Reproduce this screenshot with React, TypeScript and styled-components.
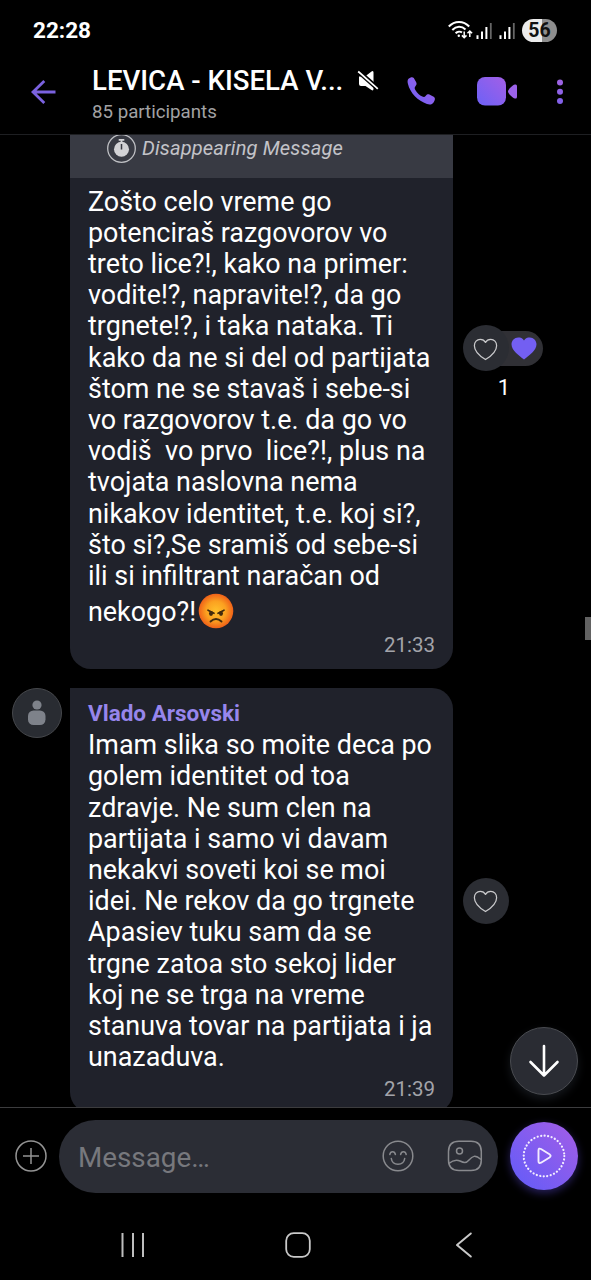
import React from "react";
import styled, { createGlobalStyle } from "styled-components";

const GlobalStyle = createGlobalStyle`
  * { box-sizing: border-box; }
  body { margin: 0; background: #000; font-family: Roboto, "Liberation Sans", sans-serif; }
  svg { display: block; flex: none; }
`;

const Screen = styled.div`
  position: relative;
  width: 591px;
  height: 1280px;
  display: flex;
  flex-direction: column;
  overflow: hidden;
  background: #000;
  color: #fff;
`;

const StatusBar = styled.div`
  height: 60px;
  flex: none;
  display: flex;
  align-items: center;
  padding: 0 34px 0 33px;
`;

const Clock = styled.span`
  flex: 1;
  font-size: 22.5px;
  font-weight: 700;
  line-height: 26px;
`;

const StatusIcons = styled.div`
  display: flex;
  align-items: center;
`;

const Signal = styled.div`
  margin: 1px 7px 0 0;
`;

const Battery = styled.div`
  width: 35px;
  height: 23px;
  border-radius: 12px;
  background: linear-gradient(90deg, #ececec 56%, #8e8e8e 56%);
  color: #111;
  font-size: 19.5px;
  font-weight: 700;
  line-height: 24px;
  text-align: center;
`;

const Header = styled.header`
  height: 75px;
  flex: none;
  display: flex;
  border-bottom: 1px solid #1e1f22;
`;

const BackSlot = styled.div`
  width: 92px;
  padding: 20px 0 0 30px;
`;

const TitleBlock = styled.div`
  width: 315px;
  display: flex;
  flex-direction: column;
`;

const TitleRow = styled.div`
  display: flex;
  height: 37px;
  padding-top: 4px;
`;

const Title = styled.h1`
  margin: 0;
  width: 265px;
  font-size: 27.6px;
  font-weight: 500;
  line-height: 34px;
  white-space: nowrap;
`;

const Participants = styled.div`
  font-size: 18.7px;
  line-height: 24px;
  margin-top: 3px;
  color: #a2a2a4;
`;

const HeaderActions = styled.div`
  display: flex;
  padding-top: 16px;
`;

const Action = styled.div<{ $w: number }>`
  width: ${(p) => p.$w}px;
`;

const Chat = styled.main`
  height: 972px;
  flex: none;
  overflow: hidden;
`;

const MessageRow = styled.div<{ $gap?: number }>`
  display: grid;
  grid-template-columns: 70px 383px 1fr;
  margin-top: ${(p) => p.$gap || 0}px;
`;

const Bubble = styled.article<{ $radius: string; $h: number }>`
  grid-column: 2;
  height: ${(p) => p.$h}px;
  border-radius: ${(p) => p.$radius};
  background: #20222b;
  overflow: hidden;
`;

const Notice = styled.div`
  height: 43px;
  padding-left: 36px;
  display: flex;
  background: #383a43;
  color: #c3c3c8;
  font-size: 20.1px;
  font-style: italic;
  line-height: 27px;
`;

const NoticeText = styled.span`
  margin-left: 6px;
  letter-spacing: 0.13px;
`;

const Body = styled.div<{ $top: number }>`
  padding: ${(p) => p.$top}px 18px 0 18px;
`;

const Sender = styled.div`
  height: 33.2px;
  color: #9786ec;
  font-size: 22.5px;
  font-weight: 700;
  line-height: 33px;
`;

const Line = styled.div`
  height: 31.2px;
  font-size: 26.9px;
  line-height: 31.2px;
  white-space: pre;
`;

const EmojiLine = styled(Line)`
  display: flex;
  margin-top: 5px;
`;

const Time = styled.div<{ $top: number }>`
  margin-top: ${(p) => p.$top}px;
  text-align: right;
  font-size: 20.5px;
  line-height: 24px;
  color: #a3a4aa;
`;

const ReactionSlot = styled.div<{ $top?: number }>`
  grid-column: 3;
  padding-left: 10px;
  ${(p) => (p.$top ? `padding-top: ${p.$top}px;` : "align-self: center;")}
`;

const ReactionPill = styled.div`
  width: 80px;
  height: 46px;
  display: flex;
  align-items: center;
`;

const LikeButton = styled.div`
  position: relative;
  z-index: 1;
  width: 46px;
  height: 46px;
  flex: none;
  border-radius: 50%;
  background: #2b2d33;
  display: flex;
  align-items: center;
  justify-content: center;
  padding: 2px 1px 0 0;
`;

const ReactionTail = styled.div`
  width: 57px;
  height: 35px;
  margin-left: -23px;
  padding-left: 25px;
  border-radius: 0 18px 18px 0;
  background: #303035;
  display: flex;
  align-items: center;
`;

const ReactionCount = styled.div`
  width: 82px;
  margin-top: 4px;
  text-align: center;
  font-size: 22px;
  line-height: 26px;
`;

const Avatar = styled.div`
  width: 50px;
  height: 50px;
  margin-left: 12px;
  border-radius: 50%;
  border: 1.5px solid #45474b;
  background: #292c32;
  display: flex;
  align-items: center;
  justify-content: center;
`;

const ScrollThumb = styled.div`
  position: absolute;
  right: 0;
  top: 617px;
  width: 6px;
  height: 23px;
  background: #626262;
`;

const ScrollDown = styled.button`
  position: absolute;
  left: 510px;
  top: 1027px;
  width: 68px;
  height: 68px;
  padding: 0;
  border-radius: 50%;
  border: 1.5px solid #494b50;
  background: #2a2c33;
  box-shadow: 0 4px 10px rgba(60, 68, 84, 0.35);
  display: flex;
  align-items: center;
  justify-content: center;
`;

const Composer = styled.footer`
  height: 103px;
  flex: none;
  display: flex;
  align-items: center;
  border-top: 1px solid #3c3c3e;
  padding: 0 13px 6px 15px;
`;

const Field = styled.div`
  width: 439px;
  height: 73px;
  margin: 0 12px;
  padding: 0 15px 0 19px;
  border-radius: 37px;
  background: #2b2d35;
  display: flex;
  align-items: center;
  gap: 33px;
`;

const Placeholder = styled.span`
  flex: 1;
  padding-top: 2px;
  font-size: 27.8px;
  color: #77787d;
`;

const RecordButton = styled.div`
  width: 68px;
  height: 68px;
  flex: none;
  border-radius: 50%;
  background: linear-gradient(45deg, #6b5cf6 15%, #9a5de9 85%);
  box-shadow: 0 3px 9px rgba(100, 80, 235, 0.4);
`;

const NavBar = styled.nav`
  height: 70px;
  display: flex;
  justify-content: space-between;
  align-items: center;
  padding: 0 118px 0 120px;
`;

const HomeSlot = styled.div`
  margin-right: 5px;
`;

const MuteSlot = styled.div`
  padding-top: 6px;
`;

const EmojiSlot = styled.div`
  margin: -4px 0 0 2px;
`;

const Gradient = ({ id }: { id: string }) => (
  <linearGradient id={id} x1="0" y1="1" x2="1" y2="0">
    <stop offset="0.15" stopColor="#7461f4" />
    <stop offset="1" stopColor="#a35fe6" />
  </linearGradient>
);

const SignalBars = () => (
  <Signal>
    <svg width="16" height="16" viewBox="0 0 16 16">
      <path d="M1.500 12.300V16M6 8.500V16M10.400 4V16" stroke="#fff" strokeWidth="2" />
      <path d="M14.800 0V16" stroke="#666" strokeWidth="1.800" />
    </svg>
  </Signal>
);

const HeartOutline = () => (
  <svg width="25" height="23" viewBox="0 0 26 24" fill="none" stroke="#c9c9cb" strokeWidth="1.300" strokeLinejoin="round">
    <path d="M13 4.600C11.800 2.300 9.700 1.400 7.500 1.400 4 1.400 1.400 4.200 1.400 8c0 6.700 5.800 10.900 11.600 14.500C18.800 18.900 24.600 14.700 24.600 8c0-3.800-2.600-6.600-6.100-6.600-2.200 0-4.300.9-5.500 3.200Z" />
  </svg>
);

const AngryFace = () => (
  <svg width="36" height="36" viewBox="0 0 36 36">
    <defs>
      <radialGradient id="angry" cx="0.5" cy="0.5" r="0.52">
        <stop offset="0" stopColor="#ffc02b" />
        <stop offset="0.55" stopColor="#fba020" />
        <stop offset="1" stopColor="#ee5b18" />
      </radialGradient>
    </defs>
    <circle cx="18" cy="18" r="17.300" fill="url(#angry)" />
    <path d="M10 17.200 16 20.300M26 17.200 20 20.300" stroke="#422b0d" strokeWidth="1.600" strokeLinecap="round" />
    <ellipse cx="13" cy="20.500" rx="2" ry="2.400" fill="#422b0d" />
    <ellipse cx="23" cy="20.500" rx="2" ry="2.400" fill="#422b0d" />
    <path d="M12.500 28.500Q18 23.500 23.500 28.500" stroke="#422b0d" strokeWidth="1.900" fill="none" strokeLinecap="round" />
  </svg>
);

const firstMessage = [
  "Zošto celo vreme go",
  "potenciraš razgovorov vo",
  "treto lice?!, kako na primer:",
  "vodite!?, napravite!?, da go",
  "trgnete!?, i taka nataka. Ti",
  "kako da ne si del od partijata",
  "štom ne se stavaš i sebe-si",
  "vo razgovorov t.e. da go vo",
  "vodiš  vo prvo  lice?!, plus na",
  "tvojata naslovna nema",
  "nikakov identitet, t.e. koj si?,",
  "što si?,Se sramiš od sebe-si",
  "ili si infiltrant naračan od",
];

const secondMessage = [
  "Imam slika so moite deca po",
  "golem identitet od toa",
  "zdravje. Ne sum clen na",
  "partijata i samo vi davam",
  "nekakvi soveti koi se moi",
  "idei. Ne rekov da go trgnete",
  "Apasiev tuku sam da se",
  "trgne zatoa sto sekoj lider",
  "koj ne se trga na vreme",
  "stanuva tovar na partijata i ja",
  "unazaduva.",
];

export default function App() {
  return (
    <Screen>
      <GlobalStyle />
      <StatusBar>
        <Clock>22:28</Clock>
        <StatusIcons>
          <svg width="28" height="20" viewBox="0 0 28 20" fill="none" stroke="#fff" strokeWidth="2">
            <path d="M.8 6.500C6.500.4 15.500.4 21.200 6.500M4.300 10C8.300 5.800 13.700 5.800 17.500 9.500M7.600 13.300C9.500 11.400 12.300 11.200 14 12.500" />
            <circle cx="10.800" cy="15.800" r="1.200" fill="#fff" stroke="none" />
            <path d="M16.200 11.500V17.500M13.900 15.400 16.200 17.700 18.500 15.400M21.800 17V11.500M19.500 13.300 21.800 11 24.100 13.300" strokeWidth="1.500" />
          </svg>
          <SignalBars />
          <SignalBars />
          <Battery>56</Battery>
        </StatusIcons>
      </StatusBar>

      <Header>
        <BackSlot>
          <svg width="26" height="24" viewBox="0 0 26 24" fill="none" stroke="#7b62df" strokeWidth="2.800">
            <path d="M25.500 12H3M14.300 1 3 12 14.300 23" />
          </svg>
        </BackSlot>
        <TitleBlock>
          <TitleRow>
            <Title>LEVICA - KISELA V...</Title>
            <MuteSlot>
              <svg width="22" height="22" viewBox="0 0 22 22">
                <path d="M2 6.500H8L14.500 1.500Q16.500.2 16.500 2.600V18.800Q16.500 21.200 14.500 20L8.500 16H4Q2 16 2 14Z" fill="#fff" />
                <path d="M1 .4 22 18.800" stroke="#000" strokeWidth="3.600" />
                <path d="M1.200 1.500 20.800 18.800" stroke="#fff" strokeWidth="1.800" />
                <path d="M1.200 3.600 18.600 19" stroke="#000" strokeWidth="1.100" />
              </svg>
            </MuteSlot>
          </TitleRow>
          <Participants>85 participants</Participants>
        </TitleBlock>
        <HeaderActions>
          <Action $w={70}>
            <svg width="29" height="30" viewBox="0 0 28 30">
              <defs><Gradient id="call" /></defs>
              <path fill="url(#call)" d="M1 2.800C2.700 1.200 5 .5 6.300 1.900L8.700 6.300C9.500 8 9 9 7.800 10.400 6.900 11.500 7.100 12.500 8 14.200 9.700 17.200 12 19.300 14.800 20.500 16.300 21.200 17.300 21 18.300 19.700 19.700 18.200 20.800 18 22.300 18.700L26.200 20.800C28 22 27.700 24 26.200 26.200 24.700 28.500 22.500 29 19.500 28 10.500 25 2.500 17 .4 7.800-.1 5.700-.1 4 1 2.800Z" />
            </svg>
          </Action>
          <Action $w={79}>
            <svg width="41" height="30" viewBox="0 -1 41 30">
              <defs><Gradient id="video" /></defs>
              <rect x="0" y="0" width="29" height="28.500" rx="8" fill="url(#video)" />
              <path d="M31 14.500C31 12.500 35.500 8 38 7.500 39.500 7.200 40 8 40 9.500V19.500C40 21 39.500 21.800 38 21.500 35.500 21 31 16.500 31 14.500Z" fill="#9b62e9" />
            </svg>
          </Action>
          <svg width="8" height="29" viewBox="0 -3 8 29">
            <circle cx="4" cy="3.500" r="3" fill="#9d63e4" />
            <circle cx="4" cy="12.700" r="3" fill="#8f62e6" />
            <circle cx="4" cy="21.900" r="3" fill="#8361e8" />
          </svg>
        </HeaderActions>
      </Header>

      <Chat>
        <MessageRow>
          <Bubble $radius="0 0 21px 21px" $h={534}>
            <Notice>
              <svg width="30" height="28" viewBox="0 0 30 28">
                <circle cx="15.500" cy="13.500" r="13.800" fill="none" stroke="#bdbec2" strokeWidth="1.300" />
                <circle cx="15.500" cy="14.200" r="7.500" fill="#d2d2d5" />
                <path d="M12.700 4.800H18.300M15.500 5V7" stroke="#d2d2d5" strokeWidth="1.800" />
                <path d="M15.500 9V14.500" stroke="#383a43" strokeWidth="1.500" />
              </svg>
              <NoticeText>Disappearing Message</NoticeText>
            </Notice>
            <Body $top={8.7}>
              {firstMessage.map((line) => <Line key={line}>{line}</Line>)}
              <EmojiLine>nekogo?!<EmojiSlot><AngryFace /></EmojiSlot></EmojiLine>
              <Time $top={4.3}>21:33</Time>
            </Body>
          </Bubble>
          <ReactionSlot $top={190}>
            <ReactionPill>
              <LikeButton><HeartOutline /></LikeButton>
              <ReactionTail>
                <svg width="26" height="23" viewBox="0 0 26 23">
                  <path fill="#735ff2" d="M13 3.500C11.500 1 9.500.5 7.200.5 3.500.5.5 3.500.5 7.300.5 13.500 8 18.500 13 22.500 18 18.500 25.500 13.500 25.500 7.300 25.500 3.500 22.500.5 18.800.5 16.500.5 14.500 1 13 3.500Z" />
                </svg>
              </ReactionTail>
            </ReactionPill>
            <ReactionCount>1</ReactionCount>
          </ReactionSlot>
        </MessageRow>

        <MessageRow $gap={19}>
          <Avatar>
            <svg width="18" height="26" viewBox="0 0 18 26" fill="#7e828a">
              <circle cx="9" cy="5" r="4.600" />
              <rect x="0" y="10.500" width="17.500" height="14.500" rx="5.500" />
            </svg>
          </Avatar>
          <Bubble $radius="0 21px 21px 21px" $h={425}>
            <Body $top={9}>
              <Sender>Vlado Arsovski</Sender>
              {secondMessage.map((line) => <Line key={line}>{line}</Line>)}
              <Time $top={3.8}>21:39</Time>
            </Body>
          </Bubble>
          <ReactionSlot>
            <LikeButton><HeartOutline /></LikeButton>
          </ReactionSlot>
        </MessageRow>
      </Chat>

      <Composer>
        <svg width="32" height="32" viewBox="0 0 32 32" fill="none" stroke="#949494" strokeWidth="1.500">
          <circle cx="16" cy="16" r="15" />
          <path d="M8 16H24M16 8V24" />
        </svg>
        <Field>
          <Placeholder>Message…</Placeholder>
          <svg width="32" height="32" viewBox="0 0 32 32" fill="none" stroke="#898a8e" strokeWidth="1.500" strokeLinecap="round">
            <circle cx="16" cy="16" r="14.800" />
            <path d="M7.800 14.500C8.500 10.800 12.700 10.800 13.400 14.500M18.600 14.500C19.300 10.800 23.500 10.800 24.200 14.500M9.300 18.500C10.300 26 21.700 26 22.700 18.500" />
          </svg>
          <svg width="36" height="32" viewBox="0 0 36 32" fill="none" stroke="#898a8e" strokeWidth="1.500">
            <path d="M12 1.200H24C31 1.200 34.300 4.500 34.300 11.500V20C34.300 27 31 30.500 24 30.500H12C5 30.500 1.500 27 1.500 20V11.500C1.500 4.500 5 1.200 12 1.200Z" />
            <circle cx="12.500" cy="11" r="3" />
            <path d="M1.800 23.500C6 20 9 19 13 21 17 23 19 23.500 22 20 25.500 16 28 14.500 34 19.500" />
          </svg>
        </Field>
        <RecordButton>
          <svg width="68" height="68" viewBox="0 0 68 68" fill="none" stroke="#f3edff">
            <circle cx="34" cy="34" r="20.300" strokeWidth="2.200" strokeDasharray="0.100 3.443" strokeLinecap="round" />
            <path d="M28.500 28.500C28.500 26.500 29.500 26.200 31 27L39.500 32.200C41 33.200 41 34.500 39.500 35.500L31 40.700C29.500 41.500 28.500 41 28.500 39.200Z" strokeWidth="1.900" strokeLinejoin="round" />
          </svg>
        </RecordButton>
      </Composer>

      <NavBar>
        <svg width="26" height="26" viewBox="0 0 26 26">
          <path d="M2.500 1V25M13 1V25M23 1V25" stroke="#bebebe" strokeWidth="2" />
        </svg>
        <HomeSlot>
          <svg width="26" height="26" viewBox="0 0 26 26">
            <rect x="1.200" y="1.200" width="23.600" height="23.600" rx="7.500" fill="none" stroke="#c9c9c9" strokeWidth="1.800" />
          </svg>
        </HomeSlot>
        <svg width="18" height="26" viewBox="0 0 18 26">
          <path d="M15.800 1.500 2 13 15.800 24.500" fill="none" stroke="#c9c9c9" strokeWidth="2" strokeLinecap="round" strokeLinejoin="round" />
        </svg>
      </NavBar>

      <ScrollThumb />
      <ScrollDown aria-label="Scroll to latest message">
        <svg width="32" height="34" viewBox="0 0 32 34" fill="none" stroke="#fff" strokeWidth="2.600" strokeLinecap="round" strokeLinejoin="round">
          <path d="M16 2V31.500M2.500 18 16 31.500 29.500 18" />
        </svg>
      </ScrollDown>
    </Screen>
  );
}
